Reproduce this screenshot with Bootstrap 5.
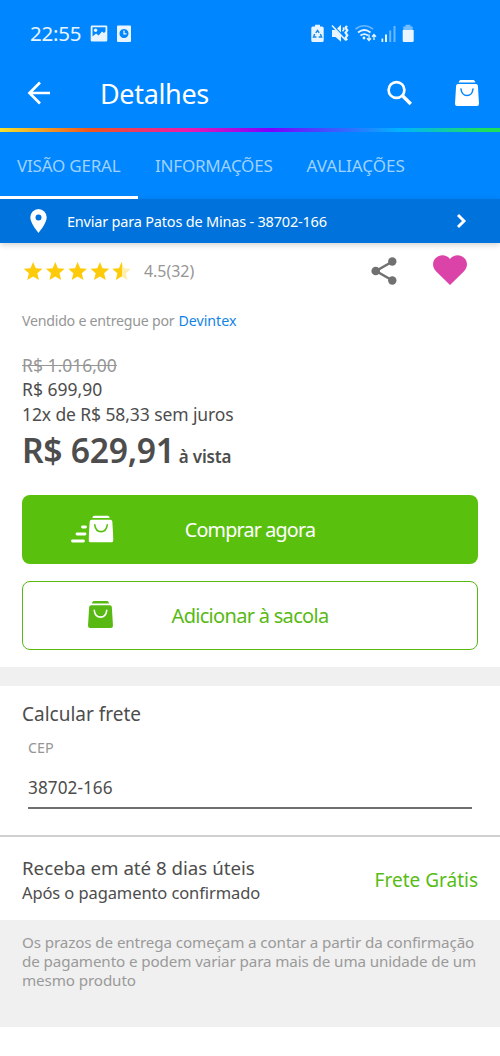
<!DOCTYPE html>
<html lang="pt-BR">
<head>
<meta charset="utf-8">
<meta name="viewport" content="width=device-width, initial-scale=1">
<title>Detalhes</title>
<link href="https://cdn.jsdelivr.net/npm/bootstrap@5.3.0/dist/css/bootstrap.min.css" rel="stylesheet">
<script src="https://cdn.jsdelivr.net/npm/bootstrap@5.3.0/dist/js/bootstrap.bundle.min.js" defer></script>
<style>
body{font-family:"Noto Sans","Open Sans",sans-serif;color:#4d4d4d;background:#fff;line-height:1;overflow:hidden}
svg{display:block;flex:none}
span,a{white-space:nowrap}
.blue{background:#0086ff;color:#fff}
.status{height:67px;padding-left:30px}
.clock{font-size:20.5px;color:#e8f4ff;letter-spacing:-.2px;width:60px}
.appbar{height:61px;padding:0 21px 1px 27px}
.back,.find{margin-top:-9px}
.title{font-size:27px;letter-spacing:-.35px;margin:-7px 0 0 49px}
.cart{--smile:#0086ff;margin:-8px 0 0 42px}
.rainbow{height:4px;background:linear-gradient(90deg,#f5e12d 0,#f0561c 18%,#ec18b0 38%,#7c00ff 54%,#00b4ff 80%,#1de05a 97%)}
.tabs .nav-link{color:#9fd2ff;font-size:17px;letter-spacing:-.2px;padding:0 17px;height:67px;display:flex;align-items:center;border-radius:0}
.tabs .nav-link.active{border-bottom:3px solid #fff;padding-top:3px;width:138px}
.tabs .nav-link:last-child{letter-spacing:0}
.address{height:44px;background:#0072db;color:#fff;font-size:14.5px;letter-spacing:-.2px;padding:0 33px 0 30px;box-shadow:0 2px 6px rgba(0,0,0,.18)}
.rating{height:57px;padding:0 33px 2px 22px}
.score{font-size:16px;margin-left:14px;letter-spacing:-.05px}
.heart{margin:-1px 0 0 36px}
.grey{color:#969696}
.seller{font-size:14.2px;height:42px;padding:0 22px;letter-spacing:-.25px}
.seller a{color:#1283e6;letter-spacing:0;margin-left:4px}
.prices{padding:11px 22px 0}
.prices>div{height:24.5px;display:flex;align-items:center;font-size:17.5px}
.prices .parcels{letter-spacing:-.1px}
.prices>.total{height:68px;align-items:baseline;font-size:33.7px;font-weight:600;letter-spacing:-.3px;padding-top:7px}
.total small{font-size:17px;font-weight:600;letter-spacing:-.15px;margin-left:4px}
.cta{width:456px;height:69px;border-radius:8px;margin:0 22px 17px;padding:2px 0 0;font-size:19.7px;letter-spacing:-.8px;border:0;display:flex;align-items:center;justify-content:center;position:relative}
.cta svg{position:absolute}
.cta-fill,.cta-fill:hover{background:#59c10e;color:#fff}
.cta-line,.cta-line:hover{border:1.5px solid #59b812;color:#58b913;background:#fff;font-size:20px;letter-spacing:-.7px}
.fast{left:46px;top:20px;--smile:#59c10e}
.add{left:65px;top:19px;--smile:#fff}
.band{height:19.5px;background:#f0f0f0}
.freight{height:148.5px;padding:18.5px 28px 0 22px}
.heading{font-size:19px}
.freight label{font-size:14.3px;margin:17px 0 0 6px;display:block}
.field{margin-left:6px;border-bottom:2px solid #707070;height:54.5px;padding-top:23px;font-size:17.2px;line-height:20px;letter-spacing:.05px}
.delivery{height:85px;border-top:2px solid #d0d0d0;padding:4px 22px 0}
.when{font-size:18.7px;margin-bottom:7px}
.after{font-size:16.5px;letter-spacing:-.1px}
.free{color:#57bc14;font-size:19px}
.note{background:#f0f0f0;color:#9a9a9a;height:107px;padding:13px 22px;font-size:15.2px;line-height:19px;letter-spacing:-.11px}
</style>
</head>
<body>
<svg width="0" height="0" class="position-absolute">
 <defs>
  <symbol id="bag" viewBox="0 0 24 26"><path d="M5.500 0h13q1.300 0 1.900 2.500H3.600Q4.200 0 5.500 0zM3 4h18q1.700 0 1.900 1.800L24 23.700q.1 2.300-2 2.300H2Q-.1 26 0 23.700L1.100 5.800Q1.300 4 3 4z"/><path d="M6 9q.8 6.500 6 6.500T18 9" fill="none" stroke="var(--smile)" stroke-width="1.500" stroke-linecap="round"/></symbol>
  <symbol id="star" viewBox="2 2 20 19"><path d="M12 17.300 18.200 21l-1.700-7L22 9.200l-7.200-.6L12 2 9.200 8.600 2 9.200 7.500 14l-1.700 7z"/></symbol>
 </defs>
</svg>
<header class="blue">
 <div class="status d-flex align-items-center">
  <span class="clock">22:55</span>
  <svg width="345" height="20" viewBox="0 0 345 20" fill="#e8f4ff">
   <path fill-rule="evenodd" d="M2 1.500h14q1.300 0 1.300 1.300v13.400q0 1.300-1.300 1.300H2q-1.300 0-1.300-1.300V2.800Q.7 1.500 2 1.500zM2.500 3.200v9.300l3.600-3 2.500 2 3.400-4 2 1.500 1.500-1.500V3.200z"/><circle cx="5.600" cy="6.200" r="1.700"/>
   <path fill-rule="evenodd" d="M28 1.500h12q1 0 1 1v14.500q0 1-1 1H28q-1 0-1-1V2.500q0-1 1-1zM34 5a4.500 4.500 0 1 0 .01 0z"/><path d="M34 6.500v3.300h2.500" fill="none" stroke="#e8f4ff" stroke-width="1.300"/>
   <path d="M225 .8h5v1.700h2q1.700 0 1.700 1.500v12.500q0 1.500-1.500 1.500h-9.400q-1.500 0-1.500-1.500V4q0-1.500 1.500-1.500h2.200z"/>
   <path d="m225.800 8.800 1.700-2.300 1.700 2.300M230.400 10l1.200 3h-3M226.500 13h-3l1.200-3" fill="none" stroke="#1687ed" stroke-width="1.400"/>
   <path d="M242 6h3.500l5.500 5.500v6.200L245.500 13H242zM247 4.500l4-3.700v7.700z"/><path d="m242 1.500 14 15" stroke="#e8f4ff" stroke-width="1.500"/>
   <path d="m257 1.800-1.500 2 1.800 2.500-1.800 2.500 1.800 2.500-1.800 2.500 1.500 2.500" fill="none" stroke="#e8f4ff" stroke-width="2.200"/><path d="m253 3.500 1 1.800-1.500 2" fill="none" stroke="#e8f4ff" stroke-width="1.500"/>
   <g fill="none" stroke="#e8f4ff" stroke-width="1.700"><path d="M265.500 5q8.500-6.500 17.500 0" opacity=".45"/><path d="M268 8.500q6.500-5 12.500 0M270.500 11.500q3.700-2.800 7.500 0"/></g><circle cx="274" cy="14" r="1.400"/>
   <path d="M279 10.500v6m-2-2.200 2 2.200 2-2.200M284 16v-5.500m-2 2.200 2-2.200 2 2.200" fill="none" stroke="#e8f4ff" stroke-width="1.300"/>
   <path d="M291.500 14.500h1.700V18h-1.700zM295 10.500h2V18h-2z"/><path opacity=".45" d="M299.200 6.500h2V18h-2zM303.500 2h2v16h-2z"/>
   <path opacity=".5" d="M315.500.8h5V2.500h2.200v4h-9.400v-4h2.200z"/><path d="M312.700 6h11v10.800q0 1.200-1.200 1.200h-8.600q-1.200 0-1.200-1.200z"/>
  </svg>
 </div>
 <div class="appbar d-flex align-items-center">
  <svg class="back" width="24" height="24" viewBox="0 0 24 24" fill="none" stroke="#fff" stroke-width="2.700"><path d="M23 12H3M13 1.500 2.500 12 13 22.500"/></svg>
  <span class="title">Detalhes</span>
  <svg class="find ms-auto" width="26" height="26" viewBox="0 0 26 26" fill="none" stroke="#fff"><circle cx="9.500" cy="10" r="7.900" stroke-width="2.700"/><path d="m15.500 15.700 8.300 8.300" stroke-width="3.400"/></svg>
  <svg class="cart" width="24" height="26" fill="#fff"><use href="#bag"/></svg>
 </div>
 <div class="rainbow"></div>
 <nav class="nav tabs flex-nowrap">
  <a class="nav-link active">VISÃO GERAL</a><a class="nav-link">INFORMAÇÕES</a><a class="nav-link">AVALIAÇÕES</a>
 </nav>
</header>
<div class="address d-flex align-items-center">
 <svg width="17" height="24" viewBox="0 0 17 24" fill="#fff"><path fill-rule="evenodd" d="M8.500 0A8.300 8.300 0 0 0 .3 8.300C.3 14.500 8.500 24 8.500 24s8.200-9.500 8.200-15.700A8.300 8.300 0 0 0 8.500 0zm0 5.400a3 3 0 1 1 0 6 3 3 0 0 1 0-6z"/></svg>
 <span style="margin-left:20px">Enviar para Patos de Minas - 38702-166</span>
 <svg class="ms-auto" width="11" height="16" viewBox="0 0 11 16" fill="none" stroke="#fff" stroke-width="2.900"><path d="m2 2 6 6-6 6"/></svg>
</div>
<main>
 <section class="rating d-flex align-items-center">
  <svg width="108" height="20" viewBox="0 0 108 20" fill="#fecb0a">
   <defs><linearGradient id="half"><stop offset=".5" stop-color="#fecb0a"/><stop offset=".5" stop-color="#feefb0"/></linearGradient></defs>
   <use href="#star" x="1.700" y="1" width="18.800" height="18"/><use href="#star" x="23.900" y="1" width="18.800" height="18"/><use href="#star" x="46.200" y="1" width="18.800" height="18"/><use href="#star" x="68.500" y="1" width="18.800" height="18"/><use href="#star" x="90.200" y="1" width="18.800" height="18" fill="url(#half)"/>
  </svg>
  <span class="score grey">4.5(32)</span>
  <svg class="ms-auto" width="26" height="28" viewBox="0 0 26 28" fill="#707070"><path d="M21.500 4.500 5 14l16.500 9.500" fill="none" stroke="#707070" stroke-width="2.500"/><circle cx="21.300" cy="4.500" r="4.200"/><circle cx="4.700" cy="14" r="4.300"/><circle cx="21.300" cy="23.500" r="4.200"/></svg>
  <svg class="heart" width="34" height="30" viewBox="0 0 34 30" fill="#dc43a9"><path d="M17 30 3.200 16.500C-1 12.300-.8 6.500 2.500 3.200 6.500-.9 13.300-.9 17 4c3.700-4.900 10.500-4.900 14.500-.8 3.300 3.300 3.500 9.100-.7 13.300z"/></svg>
 </section>
 <section class="seller grey d-flex align-items-center">Vendido e entregue por <a class="text-decoration-none">Devintex</a></section>
 <section class="prices">
  <div class="grey"><s>R$ 1.016,00</s></div>
  <div>R$ 699,90</div>
  <div class="parcels">12x de R$ 58,33 sem juros</div>
  <div class="total">R$ 629,91<small>à vista</small></div>
 </section>
 <button class="btn cta cta-fill">
  <svg class="fast" width="46" height="28" viewBox="0 0 46 28" fill="#fff"><use href="#bag" x="20.500" y="0.500" width="25" height="27"/><path d="M14.500 12h3M9 19h8M4.500 26h11" stroke="#fff" stroke-width="2.800" stroke-linecap="round"/></svg>
  <span>Comprar agora</span>
 </button>
 <button class="btn cta cta-line">
  <svg class="add" width="25" height="27" fill="#58b913"><use href="#bag"/></svg>
  <span>Adicionar à sacola</span>
 </button>
 <div class="band"></div>
 <section class="freight">
  <div class="heading">Calcular frete</div>
  <label class="grey">CEP</label>
  <div class="field">38702-166</div>
 </section>
 <section class="delivery d-flex align-items-center justify-content-between">
  <div><div class="when">Receba em até 8 dias úteis</div><div class="after">Após o pagamento confirmado</div></div>
  <span class="free">Frete Grátis</span>
 </section>
 <section class="note">Os prazos de entrega começam a contar a partir da confirmação de pagamento e podem variar para mais de uma unidade de um mesmo produto</section>
</main>
</body>
</html>
